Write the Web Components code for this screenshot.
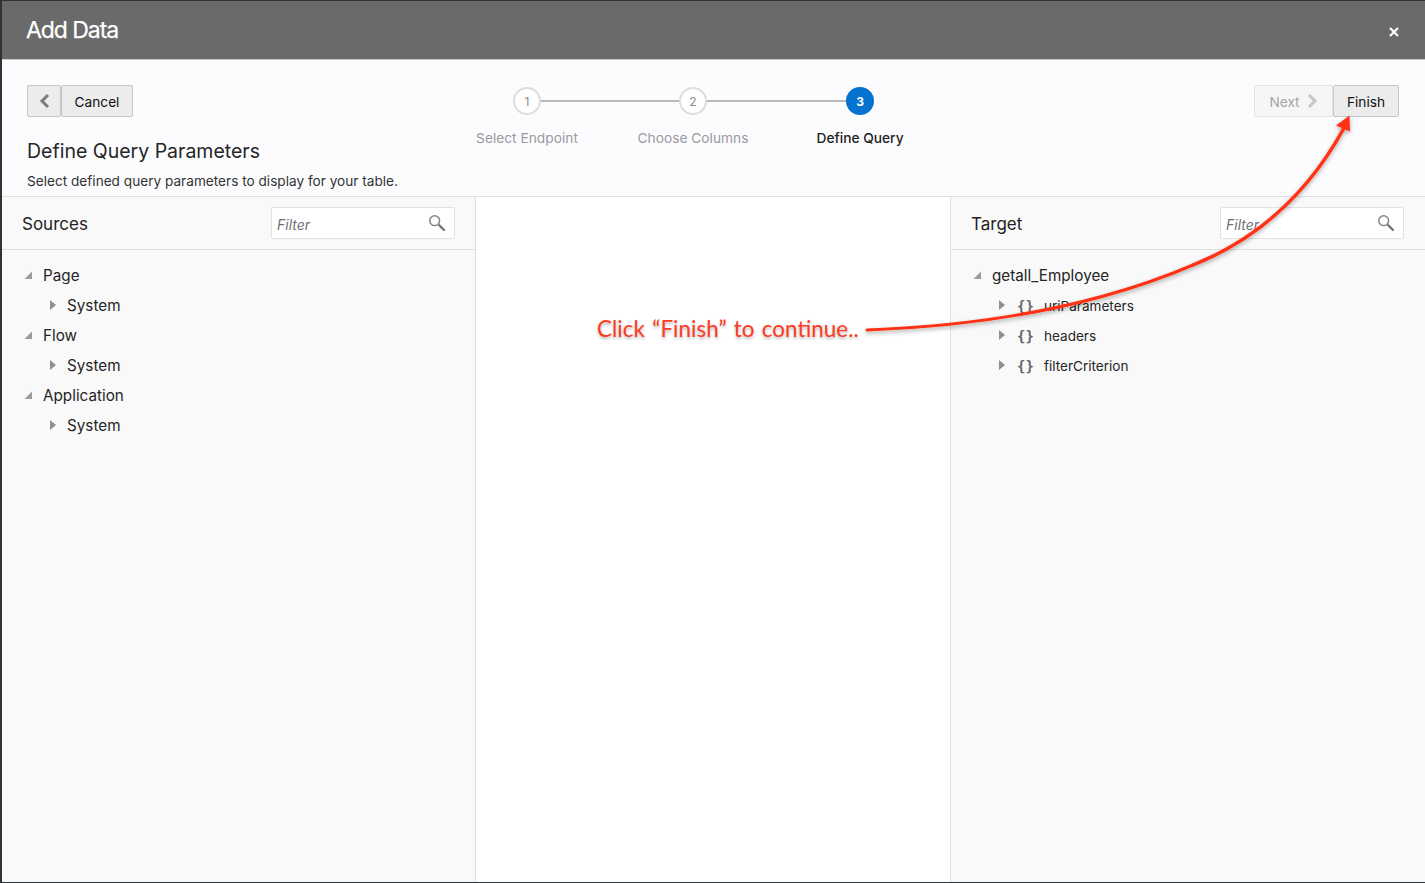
<!DOCTYPE html>
<html lang="en"><head><meta charset="utf-8"><title>Add Data</title>
<style>
html,body{margin:0;height:100%;overflow:hidden;background:#2f3336}
body{font-family:Inter,"Liberation Sans",sans-serif;color:#222;padding:1px 0 1px 2px;box-sizing:border-box;height:883px;width:1425px}
</style></head><body>
<add-data-dialog></add-data-dialog>
<script>
function def(name,css,html){
  customElements.define(name,class extends HTMLElement{
    connectedCallback(){
      if(this.shadowRoot)return;
      const r=this.attachShadow({mode:'open'});
      r.innerHTML='<style>'+css+'</style>'+(typeof html==='function'?html(this):html);
    }
  });
}
const searchIcon='<svg width="18" height="18" viewBox="0 0 18 18" fill="none"><circle cx="6.7" cy="6.7" r="4.9" stroke="#858585" stroke-width="1.5"/><path d="M10.6 10.6l1.2 1.2" stroke="#858585" stroke-width="1.5"/><path d="M11.6 11.6l4.4 4.4" stroke="#777" stroke-width="2.4" stroke-linecap="round"/></svg>';

def('wiz-button',`
:host{display:inline-flex;height:32px;box-sizing:border-box;padding-top:2px;align-items:center;justify-content:center;gap:7px;border:1px solid #c6c6c6;border-radius:2px;background:#ececec;color:#111;font-size:13.7px;cursor:default}
:host([disabled]){background:#f6f6f6;border-color:#e4e4e4;color:#a5a5a5}
`,'<slot></slot>');

def('step-item',`
:host{display:flex;flex-direction:column;align-items:center;width:166px;color:#9a9a9f;font-size:13.75px;position:relative}
:host([last]){width:168px}
.c{width:28px;height:28px;box-sizing:border-box;border-radius:50%;border:2px solid #dedede;background:#fff;display:flex;align-items:center;justify-content:center;font-size:12px;color:#8a8a8a;position:relative;z-index:1}
:host([active]) .c{background:#0572ce;border-color:#0572ce;color:#fff;font-weight:700}
:host([active]){color:#222;font-weight:500}
.l{margin-top:15px;line-height:17px;white-space:nowrap}
.line{position:absolute;left:50%;width:100%;top:13px;height:2px;background:#b9b9bb}
:host([last]) .line{display:none}
`,h=>`<div class="line"></div><div class="c">${h.getAttribute('n')}</div><div class="l"><slot></slot></div>`);

def('tree-row',`
:host{display:flex;align-items:center;height:30px;box-sizing:border-box;font-size:15.25px;color:#252525;white-space:nowrap}
.t{width:17px;display:flex;justify-content:flex-start;flex:none}
:host([open]) .t{width:19px}
.b{font-family:"DejaVu Sans Mono","Liberation Mono",monospace;font-weight:700;color:#666;font-size:14px;width:26px;flex:none;letter-spacing:0;margin-left:1px;margin-right:1px}
:host([json]){font-size:13.55px;padding-top:2px}
:host([json]) .t{margin-top:-2px}
`,h=>{
  const open=h.hasAttribute('open');
  const tri=open?'<svg width="10" height="10" viewBox="0 0 10 10" style="margin-left:-1px"><path d="M9 1.500V9H1.500z" fill="#9c9c9c"/></svg>'
               :'<svg width="8" height="12" viewBox="0 0 8 12" style="margin-left:-1px"><path d="M1 1l6 5-6 5z" fill="#8f8f8f"/></svg>';
  return `<span class="t">${tri}</span>${h.hasAttribute('json')?'<span class="b">{}</span>':''}<slot></slot>`;
});

def('filter-box',`
:host{display:flex;align-items:center;justify-content:space-between;width:184px;height:32px;box-sizing:border-box;background:#fff;border:1px solid #e2e2e2;border-radius:2px;padding:0 8px 0 5px;font-style:italic;font-size:14px;color:#707078}
span{padding-top:3px}
svg{display:block;margin-top:-1px}
`,'<span>Filter</span>'+searchIcon);

def('side-panel',`
:host{display:flex;flex-direction:column;background:#f9f9f9;min-width:0}
header{height:53px;box-sizing:border-box;border-bottom:1px solid #dfdfdf;display:flex;align-items:center;justify-content:space-between;padding:0 20px}
:host([tight]) header{padding-right:21px}
h2{margin:0;padding-top:2px;font-weight:400;font-size:17px;color:#222}
.body{padding:10px 22px}
`,h=>`<header><h2>${h.getAttribute('heading')}</h2><filter-box></filter-box></header><div class="body"><slot></slot></div>`);

def('tree-indent',`:host{display:block;padding-left:26px}`,'<slot></slot>');

def('annotation-layer',`
:host{position:absolute;inset:0;pointer-events:none;z-index:5}
svg{position:absolute;left:0;top:0;overflow:visible}
.t{position:absolute;left:597px;top:315px;font-family:Lato,"Open Sans",sans-serif;font-size:22.5px;line-height:28px;word-spacing:1.500px;color:#ff3b22;white-space:nowrap;text-shadow:0 2px 3px rgba(0,0,0,.3)}
`,`<div class="t">Click “Finish” to continue..</div>
<svg width="1425" height="883" viewBox="0 0 1425 883"><defs><filter id="s" x="-10%" y="-10%" width="120%" height="120%"><feDropShadow dx="0" dy="2" stdDeviation="2" flood-color="#000" flood-opacity=".35"/></filter></defs>
<g filter="url(#s)" fill="none" stroke="#ff3214" stroke-linecap="round"><path d="M867 330C975 326 1090 309 1193 265" stroke-width="3"/><path d="M1193 265C1260 238 1310 190 1344 128" stroke-width="3.500"/>
<path d="M1349.500 115.500L1336 125.500L1350 131.500z" fill="#ff3214" stroke="none"/></g></svg>`);

def('add-data-dialog',`
:host{display:flex;flex-direction:column;height:881px;background:#fff;position:relative;overflow:hidden}
.title{height:58px;flex:none;background:#6a6a6a;border-bottom:1px solid #c9c9c9;display:flex;align-items:center;justify-content:space-between;padding:0 25px;color:#fff}
.title h1{margin:0 0 0 -1px;font-weight:400;font-size:23px;letter-spacing:-1.05px;color:#fff;-webkit-text-stroke:.25px #fff}
.x{width:12px;height:12px;display:block;margin-top:3px}
.wiz{height:137px;flex:none;box-sizing:border-box;background:#fcfcfe;border-bottom:1px solid #dfdfdf;position:relative;padding:25px 25px 0}
.top{display:grid;grid-template-columns:1fr auto 1fr;align-items:start}
.left,.right{display:flex;gap:0}.right{justify-content:flex-end;margin-right:1px}
.steps{display:flex;margin-left:-39px;margin-top:2px}
h3{margin:-8px 0 0;font-weight:400;font-size:19.5px;line-height:24px;color:#252525}
p{margin:9px 0 0;font-size:13.63px;line-height:18px;color:#333}
.cols{flex:1;display:grid;grid-template-columns:473px 1px 474px 1px 1fr;min-height:0}
.rule{background:#e0e0e0}
.mid{background:#fff}
svg.ch{display:block;margin-top:-2px}
`,`
<div class="title"><h1>Add Data</h1><svg class="x" viewBox="0 0 12 12"><path d="M2 2l8 8M10 2l-8 8" stroke="#fff" stroke-width="2.200"/></svg></div>
<div class="wiz">
  <div class="top">
    <div class="left">
      <wiz-button style="width:34px"><svg class="ch" width="11" height="16" viewBox="0 0 11 16"><path d="M9 2L3 8l6 6" fill="none" stroke="#7d7d7d" stroke-width="3"/></svg></wiz-button>
      <wiz-button style="width:72px">Cancel</wiz-button>
    </div>
    <div class="steps">
      <step-item n="1">Select Endpoint</step-item>
      <step-item n="2">Choose Columns</step-item>
      <step-item n="3" active last>Define Query</step-item>
    </div>
    <div class="right">
      <wiz-button disabled style="width:79px">Next<svg class="ch" width="11" height="16" viewBox="0 0 11 16"><path d="M2 2l6 6-6 6" fill="none" stroke="#c6c6c6" stroke-width="3"/></svg></wiz-button>
      <wiz-button style="width:66px">Finish</wiz-button>
    </div>
  </div>
  <h3>Define Query Parameters</h3>
  <p>Select defined query parameters to display for your table.</p>
</div>
<div class="cols">
  <side-panel heading="Sources">
    <tree-row open>Page</tree-row><tree-indent><tree-row>System</tree-row></tree-indent>
    <tree-row open>Flow</tree-row><tree-indent><tree-row>System</tree-row></tree-indent>
    <tree-row open>Application</tree-row><tree-indent><tree-row>System</tree-row></tree-indent>
  </side-panel>
  <div class="rule"></div><div class="mid"></div><div class="rule"></div>
  <side-panel heading="Target" tight>
    <tree-row open>getall_Employee</tree-row>
    <tree-indent>
      <tree-row json>uriParameters</tree-row>
      <tree-row json>headers</tree-row>
      <tree-row json>filterCriterion</tree-row>
    </tree-indent>
  </side-panel>
</div>
`);
</script>
<annotation-layer></annotation-layer>
</body></html>
